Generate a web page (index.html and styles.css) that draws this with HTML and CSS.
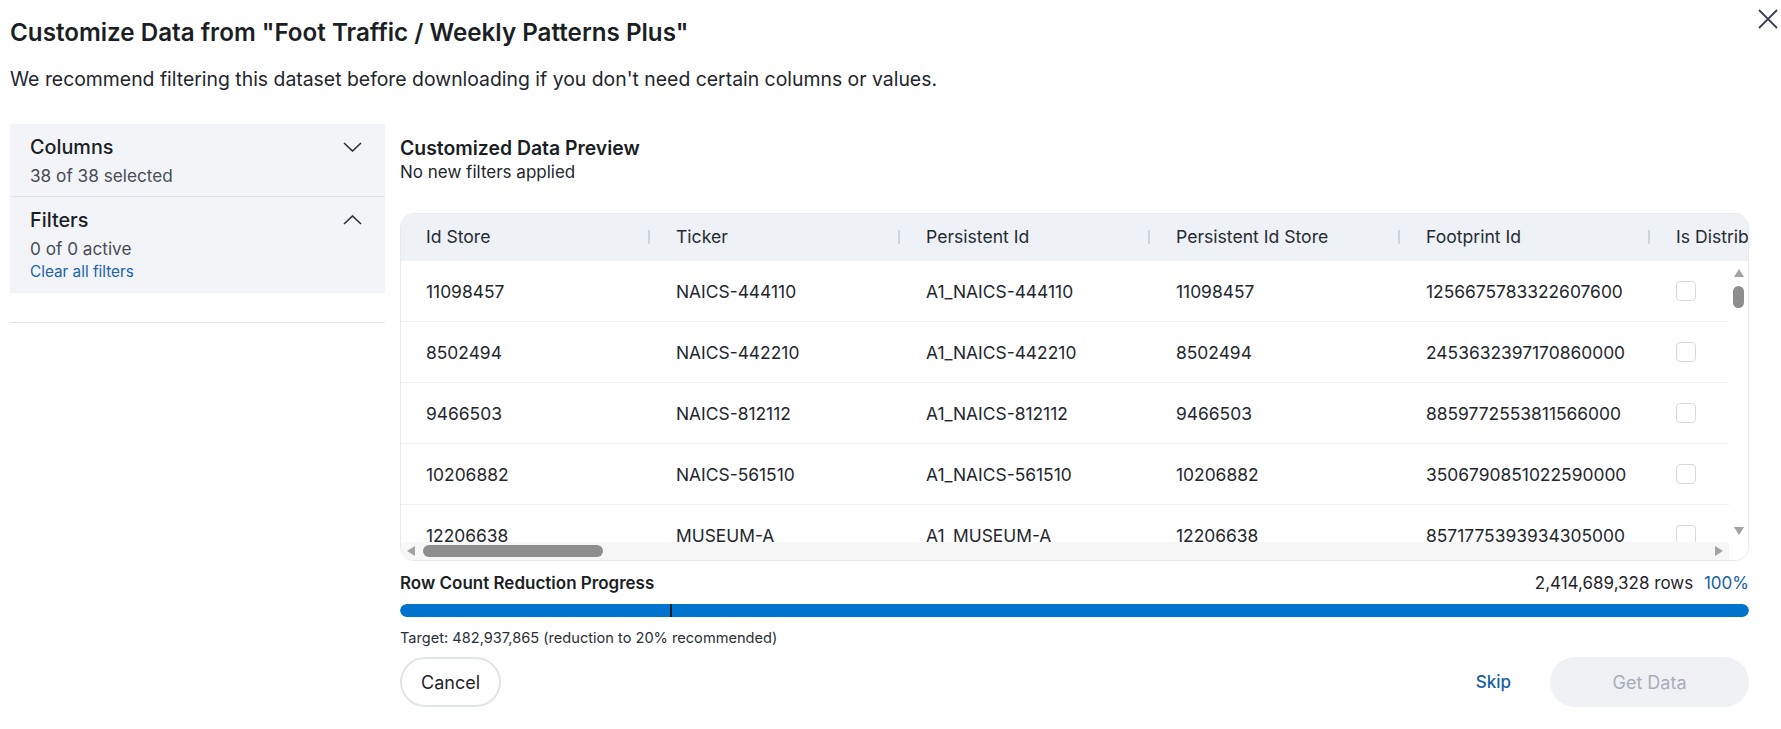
FILE: index.html
```html
<!DOCTYPE html>
<html lang="en">
<head>
<meta charset="utf-8">
<title>Customize Data</title>
<link rel="stylesheet" href="styles.css">
</head>
<body>
<div class="modal">
  <button class="close" aria-label="Close">
    <svg width="20" height="20" viewBox="0 0 20 20"><path d="M1 1 L19 19 M19 1 L1 19" stroke="#3b434e" stroke-width="1.8" fill="none"/></svg>
  </button>
  <h1 class="title">Customize Data from "Foot Traffic / Weekly Patterns Plus"</h1>
  <p class="subtitle">We recommend filtering this dataset before downloading if you don't need certain columns or values.</p>

  <div class="main">
    <aside class="side">
      <div class="panel">
        <div class="section">
          <div class="sec-head">
            <span class="sec-title">Columns</span>
            <svg class="chev" width="19" height="10" viewBox="0 0 19 10"><path d="M1 1 L9.5 9 L18 1" stroke="#2a3039" stroke-width="1.6" fill="none"/></svg>
          </div>
          <div class="sec-sub">38 of 38 selected</div>
        </div>
        <div class="section last">
          <div class="sec-head">
            <span class="sec-title">Filters</span>
            <svg class="chev" width="19" height="10" viewBox="0 0 19 10"><path d="M1 9 L9.5 1 L18 9" stroke="#2a3039" stroke-width="1.6" fill="none"/></svg>
          </div>
          <div class="sec-sub">0 of 0 active</div>
          <a class="clear" href="#">Clear all filters</a>
        </div>
      </div>
      <div class="side-rule"></div>
    </aside>

    <section class="content">
      <h2 class="prev-title">Customized Data Preview</h2>
      <div class="prev-sub">No new filters applied</div>

      <div class="table">
        <div class="thead">
          <div class="th">Id Store<span class="sep"></span></div>
          <div class="th">Ticker<span class="sep"></span></div>
          <div class="th">Persistent Id<span class="sep"></span></div>
          <div class="th">Persistent Id Store<span class="sep"></span></div>
          <div class="th">Footprint Id<span class="sep"></span></div>
          <div class="th">Is Distributor</div>
        </div>
        <div class="tbody">
          <div class="rows">
            <div class="tr"><div class="td">11098457</div><div class="td">NAICS-444110</div><div class="td">A1_NAICS-444110</div><div class="td">11098457</div><div class="td">1256675783322607600</div><div class="td"><span class="cb"></span></div></div>
            <div class="tr"><div class="td">8502494</div><div class="td">NAICS-442210</div><div class="td">A1_NAICS-442210</div><div class="td">8502494</div><div class="td">2453632397170860000</div><div class="td"><span class="cb"></span></div></div>
            <div class="tr"><div class="td">9466503</div><div class="td">NAICS-812112</div><div class="td">A1_NAICS-812112</div><div class="td">9466503</div><div class="td">8859772553811566000</div><div class="td"><span class="cb"></span></div></div>
            <div class="tr"><div class="td">10206882</div><div class="td">NAICS-561510</div><div class="td">A1_NAICS-561510</div><div class="td">10206882</div><div class="td">3506790851022590000</div><div class="td"><span class="cb"></span></div></div>
            <div class="tr"><div class="td">12206638</div><div class="td">MUSEUM-A</div><div class="td">A1_MUSEUM-A</div><div class="td">12206638</div><div class="td">8571775393934305000</div><div class="td"><span class="cb"></span></div></div>
          </div>
          <div class="vscroll">
            <span class="arr-up"></span>
            <span class="vthumb"></span>
            <span class="vspace"></span>
            <span class="arr-down"></span>
          </div>
        </div>
        <div class="hscroll">
          <div class="htrack">
            <span class="arr-left"></span>
            <span class="hthumb"></span>
            <span class="hspace"></span>
            <span class="arr-right"></span>
          </div>
          <div class="corner"></div>
        </div>
      </div>

      <div class="progress-head">
        <span class="prog-title">Row Count Reduction Progress</span>
        <span class="prog-count">2,414,689,328 rows <span class="pct">100%</span></span>
      </div>
      <div class="bar"><div class="fill" style="width:100%"></div><span class="marker" style="left:20%"></span></div>
      <div class="target">Target: 482,937,865 (reduction to 20% recommended)</div>

      <div class="actions">
        <button class="btn cancel">Cancel</button>
        <div class="right-actions">
          <button class="btn skip">Skip</button>
          <button class="btn getdata" disabled>Get Data</button>
        </div>
      </div>
    </section>
  </div>
</div>
</body>
</html>
```

FILE: styles.css
```css
* { box-sizing: border-box; }
html, body { margin: 0; padding: 0; background: #fff; }
body {
  font-family: Inter, "Noto Sans", "Liberation Sans", sans-serif;
  color: #1d2127;
  width: 1781px;
  height: 729px;
  overflow: hidden;
}
.modal {
  position: relative;
  padding: 17px 32px 0 10px;
}
.close {
  position: absolute;
  top: 9px;
  left: 1758px;
  width: 20px;
  height: 20px;
  padding: 0;
  border: 0;
  background: none;
  display: flex;
}
.title {
  margin: 0;
  font-size: 24.2px;
  line-height: 32px;
  font-weight: 600;
  color: #1b1f25;
}
.subtitle {
  margin: 18px 0 0;
  font-size: 19.4px;
  line-height: 24px;
  color: #22262c;
}
.main {
  display: flex;
  gap: 15px;
  margin-top: 33px;
}
.side {
  width: 375px;
  flex: none;
}
.panel {
  background: #f3f4f8;
}
.section {
  padding: 10px 23px 6px 20px;
  border-bottom: 1px solid #dfe2e8;
}
.section.last {
  border-bottom: 0;
  padding-top: 10px;
  padding-bottom: 10px;
}
.sec-head {
  display: flex;
  justify-content: space-between;
  align-items: center;
  height: 26px;
}
.sec-title {
  font-size: 19.8px;
  line-height: 26px;
  font-weight: 500;
  color: #1b1f25;
}
.chev { display: block; }
.sec-sub {
  margin-top: 2px;
  font-size: 17.2px;
  line-height: 28px;
  color: #474d57;
}
.clear {
  display: block;
  margin-top: -2px;
  font-size: 15.3px;
  line-height: 22px;
  color: #1b62ad;
  text-decoration: none;
}
.side-rule {
  margin-top: 29px;
  border-top: 1px solid #e1e4e9;
}
.content {
  flex: 1;
  min-width: 0;
  padding-top: 12px;
}
.prev-title {
  margin: 0;
  font-size: 19.4px;
  line-height: 24px;
  font-weight: 600;
  color: #1b1f25;
}
.prev-sub {
  font-size: 17px;
  line-height: 24px;
  color: #22262c;
}
.table {
  margin-top: 29px;
  border: 1px solid #e6e9ee;
  border-radius: 14px;
  overflow: hidden;
  width: 1349px;
}
.thead {
  display: flex;
  height: 47px;
  background: #eef1f6;
}
.th {
  position: relative;
  flex: none;
  width: 250px;
  padding-left: 25px;
  padding-bottom: 2px;
  display: flex;
  align-items: center;
  font-size: 17.6px;
  color: #262b32;
  white-space: nowrap;
}
.sep {
  position: absolute;
  right: 1px;
  top: 16px;
  width: 2px;
  height: 14px;
  background: #cdd5de;
}
.tbody {
  display: flex;
  height: 281px;
}
.rows {
  flex: 1;
  overflow: hidden;
}
.tr {
  display: flex;
  height: 61px;
  border-bottom: 1px solid #eef0f3;
}
.td {
  flex: none;
  width: 250px;
  padding-left: 25px;
  display: flex;
  align-items: center;
  font-size: 17.4px;
  color: #23272d;
  white-space: nowrap;
}
.cb {
  width: 20px;
  height: 20px;
  border: 1px solid #d6dade;
  border-radius: 4px;
  background: #fff;
}
.vscroll {
  width: 19px;
  flex: none;
  display: flex;
  flex-direction: column;
  align-items: center;
  background: #fff;
  padding: 8px 0 7px;
}
.arr-up {
  width: 0; height: 0;
  border-left: 5px solid transparent;
  border-right: 5px solid transparent;
  border-bottom: 8px solid #a3a3a3;
}
.vthumb {
  margin-top: 9px;
  width: 11px;
  height: 22px;
  border-radius: 6px;
  background: #8e8e8e;
}
.vspace { flex: 1; }
.arr-down {
  width: 0; height: 0;
  border-left: 5px solid transparent;
  border-right: 5px solid transparent;
  border-top: 8px solid #a3a3a3;
}
.hscroll {
  display: flex;
  height: 18px;
}
.htrack {
  flex: 1;
  display: flex;
  align-items: center;
  background: #f7f7f7;
  padding: 0 6px 0 6px;
}
.arr-left {
  width: 0; height: 0;
  border-top: 5px solid transparent;
  border-bottom: 5px solid transparent;
  border-right: 8px solid #a3a3a3;
}
.hthumb {
  margin-left: 8px;
  width: 180px;
  height: 12px;
  border-radius: 6px;
  background: #8e8e8e;
}
.hspace { flex: 1; }
.arr-right {
  width: 0; height: 0;
  border-top: 5px solid transparent;
  border-bottom: 5px solid transparent;
  border-left: 8px solid #a3a3a3;
}
.corner {
  width: 19px;
  flex: none;
  background: #fff;
}
.progress-head {
  margin-top: 10px;
  display: flex;
  justify-content: space-between;
  font-size: 17px;
  line-height: 24px;
}
.prog-title { font-weight: 600; color: #1b1f25; }
.prog-count { color: #1f2329; }
.pct { color: #155fa8; margin-left: 6px; }
.bar {
  position: relative;
  margin-top: 9px;
  height: 13px;
  border-radius: 7px;
  background: #e3e7ec;
  overflow: hidden;
}
.fill {
  height: 100%;
  background: #0073cf;
  border-radius: 7px;
}
.marker {
  position: absolute;
  top: 0;
  width: 2px;
  height: 100%;
  background: #1b1f25;
}
.target {
  margin-top: 11px;
  font-size: 14.6px;
  line-height: 20px;
  color: #2a2f36;
}
.actions {
  margin-top: 9px;
  display: flex;
  justify-content: space-between;
  align-items: center;
}
.right-actions {
  display: flex;
  align-items: center;
  gap: 19px;
}
.btn {
  font-family: inherit;
  height: 50px;
  border-radius: 25px;
  font-size: 18px;
  cursor: pointer;
}
.cancel {
  width: 101px;
  background: #fff;
  border: 2px solid #e1e5eb;
  color: #1f2329;
}
.skip {
  background: none;
  border: 0;
  padding: 0 20px;
  color: #155fa8;
  font-size: 17px;
  font-weight: 500;
}
.getdata {
  width: 199px;
  background: #eff1f5;
  border: 0;
  color: #a9aeb6;
}
```
